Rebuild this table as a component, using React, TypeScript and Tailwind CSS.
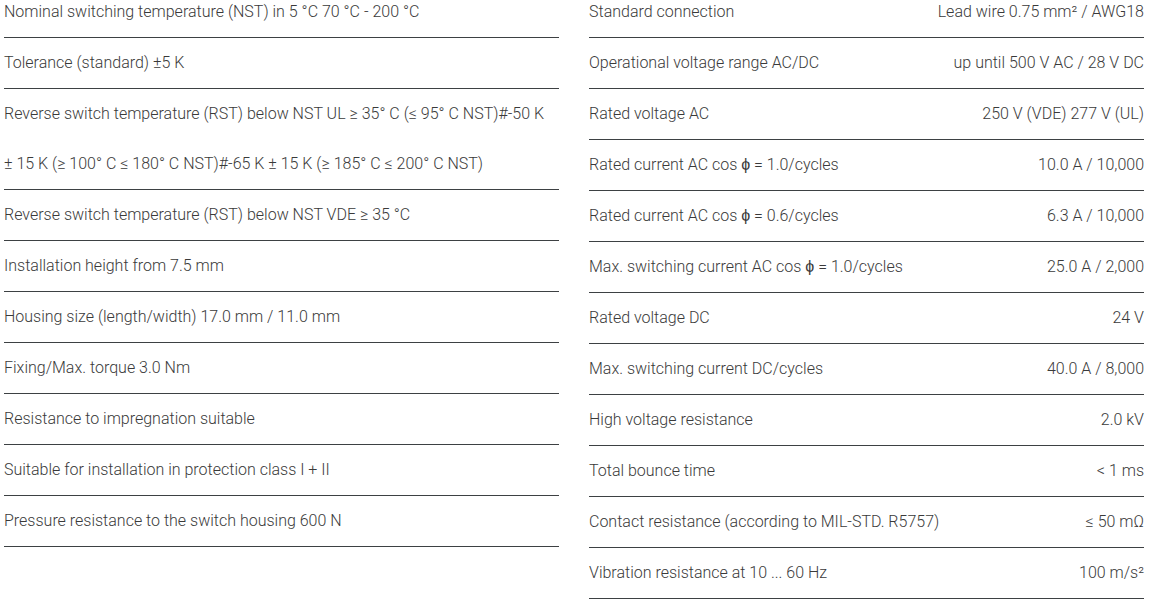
import React from "react";

const leftRows: string[] = [
  "Nominal switching temperature (NST) in 5 °C 70 °C - 200 °C",
  "Tolerance (standard) ±5 K",
  "Reverse switch temperature (RST) below NST UL ≥ 35° C (≤ 95° C NST)#-50 K ±\u00a015 K (≥ 100° C ≤ 180° C NST)#-65 K ± 15 K (≥ 185° C ≤ 200° C NST)",
  "Reverse switch temperature (RST) below NST VDE ≥ 35 °C",
  "Installation height from 7.5 mm",
  "Housing size (length/width) 17.0 mm / 11.0 mm",
  "Fixing/Max. torque 3.0 Nm",
  "Resistance to impregnation suitable",
  "Suitable for installation in protection class I + II",
  "Pressure resistance to the switch housing 600 N",
];

const rightRows: [string, string][] = [
  ["Standard connection", "Lead wire 0.75 mm² / AWG18"],
  ["Operational voltage range AC/DC", "up until 500 V AC / 28 V DC"],
  ["Rated voltage AC", "250 V (VDE) 277 V (UL)"],
  ["Rated current AC cos ϕ = 1.0/cycles", "10.0 A / 10,000"],
  ["Rated current AC cos ϕ = 0.6/cycles", "6.3 A / 10,000"],
  ["Max. switching current AC cos ϕ = 1.0/cycles", "25.0 A / 2,000"],
  ["Rated voltage DC", "24 V"],
  ["Max. switching current DC/cycles", "40.0 A / 8,000"],
  ["High voltage resistance", "2.0 kV"],
  ["Total bounce time", "< 1 ms"],
  ["Contact resistance (according to MIL-STD. R5757)", "≤ 50 mΩ"],
  ["Vibration resistance at 10 ... 60 Hz", "100 m/s²"],
];

export default function App() {
  return (
    <div
      className="bg-white min-h-screen overflow-hidden text-[#3a3a3a] text-[16px] font-light"
      style={{ fontFamily: "Roboto, 'Liberation Sans', sans-serif" }}
    >
      <div className="grid grid-cols-[555px_555px] gap-x-[30px] pl-1 -mt-[13px]">
        {/* Left column */}
        <div className="flex flex-col">
          {leftRows.map((text, i) => (
            <div
              key={i}
              className="leading-[50px] border-b border-[#3d4143]"
            >
              {text}
            </div>
          ))}
        </div>

        {/* Right column */}
        <div className="flex flex-col">
          {rightRows.map(([label, value], i) => (
            <div
              key={i}
              className="flex justify-between leading-[50px] border-b border-[#3d4143]"
            >
              <span>{label}</span>
              <span>{value}</span>
            </div>
          ))}
        </div>
      </div>
    </div>
  );
}
